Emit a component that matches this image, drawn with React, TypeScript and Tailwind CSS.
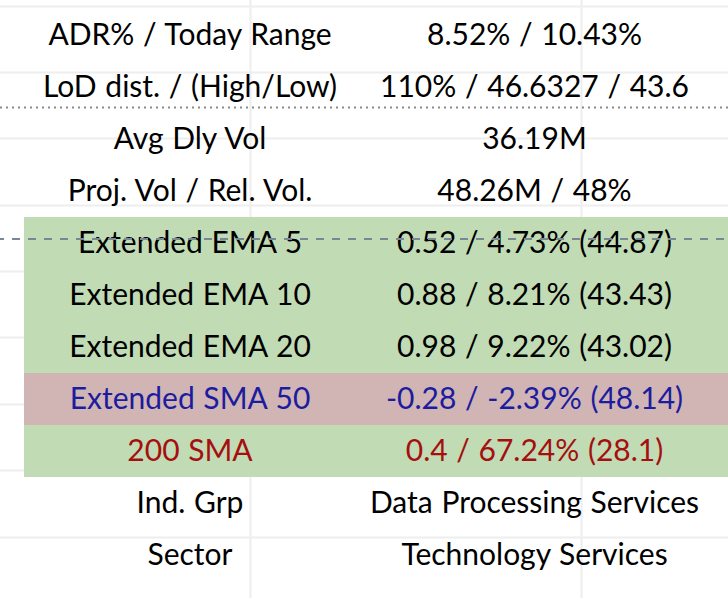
import React from "react";

type Row = { label: string; value: string; bg?: string; text?: string };

const rows: Row[] = [
  { label: "ADR% / Today Range", value: "8.52% / 10.43%" },
  { label: "LoD dist. / (High/Low)", value: "110% / 46.6327 / 43.6" },
  { label: "Avg Dly Vol", value: "36.19M" },
  { label: "Proj. Vol / Rel. Vol.", value: "48.26M / 48%" },
  { label: "Extended EMA 5", value: "0.52 / 4.73% (44.87)", bg: "bg-[#c1dbb4]" },
  { label: "Extended EMA 10", value: "0.88 / 8.21% (43.43)", bg: "bg-[#c1dbb4]" },
  { label: "Extended EMA 20", value: "0.98 / 9.22% (43.02)", bg: "bg-[#c1dbb4]" },
  { label: "Extended SMA 50", value: "-0.28 / -2.39% (48.14)", bg: "bg-[#d1b4b4]", text: "text-[#1c1c9e]" },
  { label: "200 SMA", value: "0.4 / 67.24% (28.1)", bg: "bg-[#c1dbb4]", text: "text-[#a50f0f]" },
  { label: "Ind. Grp", value: "Data Processing Services" },
  { label: "Sector", value: "Technology Services" },
];

const hLines = [6, 72, 138, 205, 271, 337, 404, 470, 537];
const vLines = [250, 581];

export default function App() {
  return (
    <div className="relative w-[728px] h-[598px] bg-white overflow-hidden font-['Lato',sans-serif]">
      <svg className="absolute inset-0" width="728" height="598">
        {hLines.map((y) => (
          <line key={y} x1="0" x2="728" y1={y + 0.5} y2={y + 0.5} stroke="#eeeeee" strokeWidth="2" />
        ))}
        {vLines.map((x) => (
          <line key={x} y1="0" y2="598" x1={x + 0.5} x2={x + 0.5} stroke="#eeeeee" strokeWidth="2" />
        ))}
      </svg>
      <div className="relative pt-[9px] pl-[24px] flex flex-col">
        {rows.map((r) => (
          <div key={r.label} className={`grid grid-cols-[332px_357px] h-[52px] items-center text-[30px] leading-none [word-spacing:1px] ${r.bg ?? ""} ${r.text ?? "text-black"}`}>
            <div className="text-center whitespace-nowrap -mt-[5px]">{r.label}</div>
            <div className="text-center whitespace-nowrap -mt-[5px]">{r.value}</div>
          </div>
        ))}
      </div>
      <svg className="absolute inset-0 pointer-events-none" width="728" height="598">
        <line x1="0" x2="728" y1="107.5" y2="107.5" stroke="#8a8a8a" strokeWidth="2" strokeDasharray="2 4" />
        <line x1="-4" x2="728" y1="239" y2="239" stroke="#7b8794" strokeWidth="2" strokeDasharray="8 8" />
      </svg>
    </div>
  );
}
